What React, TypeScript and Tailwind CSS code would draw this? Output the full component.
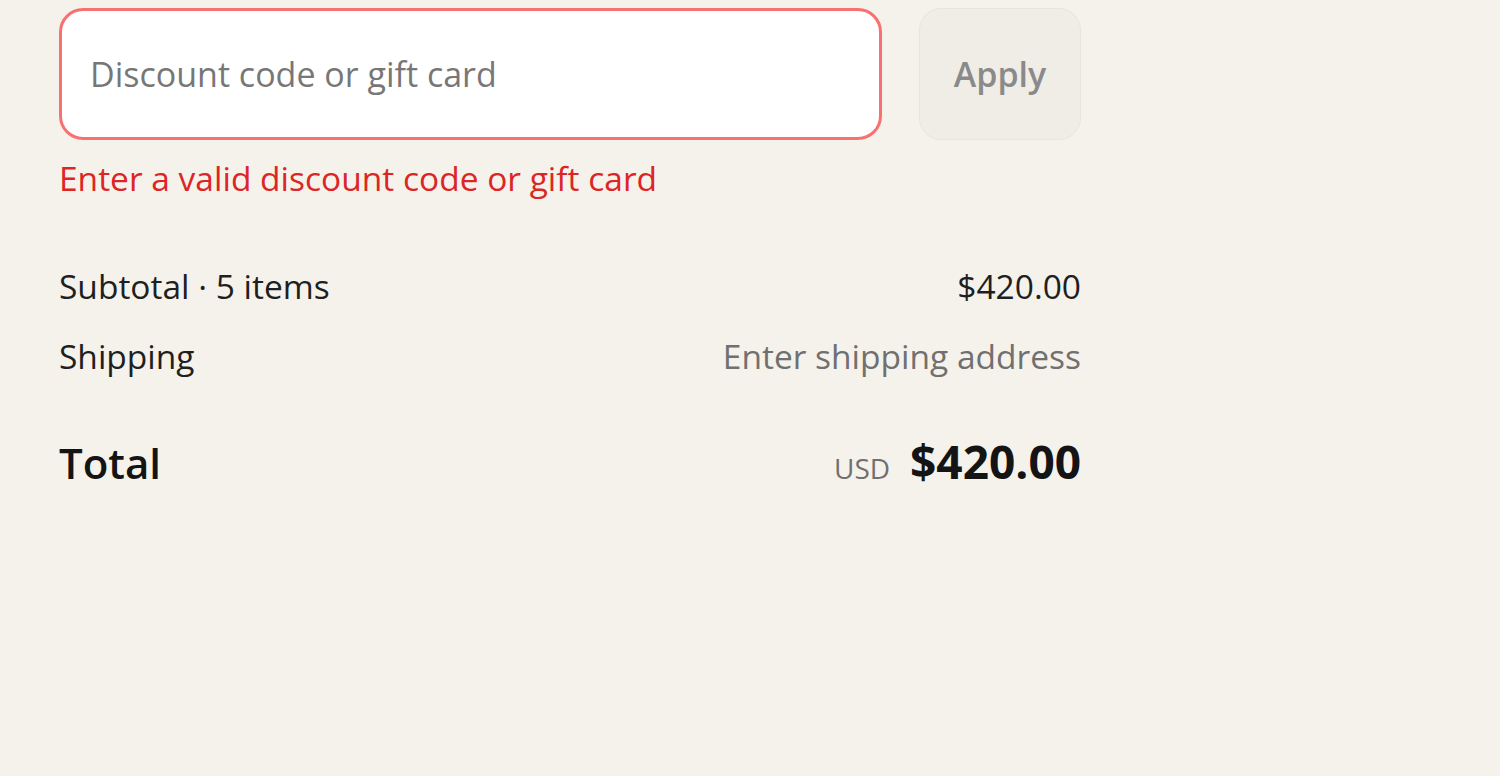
import { useState } from 'react'

export default function App() {
  const [code, setCode] = useState('')

  return (
    <div className="min-h-screen w-full bg-[#f5f2ec] pl-[59px] pt-[8px]" style={{ fontFamily: '"Open Sans", "Noto Sans", sans-serif' }}>
      <div className="w-[1022px]">
        <div className="flex gap-[37px]">
          <input
            value={code}
            onChange={e => setCode(e.target.value)}
            placeholder="Discount code or gift card"
            className="h-[132px] flex-1 rounded-[24px] border-[3px] border-[#f87171] bg-white px-[28px] text-[34px] text-[#222] placeholder:text-[#777] outline-none"
          />
          <button className="h-[132px] w-[162px] rounded-[22px] border border-[#e9e5dd] bg-[#f0ede6] text-[34px] font-semibold text-[#8a8a8a]">
            Apply
          </button>
        </div>
        <div className="mt-[18px] text-[33.5px] leading-[40px] text-[#dc2626]">Enter a valid discount code or gift card</div>

        <div className="mt-[68px] flex justify-between text-[33.5px] leading-[40px] text-[#1f1f1f]">
          <span>Subtotal · 5 items</span>
          <span>$420.00</span>
        </div>
        <div className="mt-[30px] flex justify-between text-[33.5px] leading-[40px]">
          <span className="text-[#1f1f1f]">Shipping</span>
          <span className="text-[#707070]">Enter shipping address</span>
        </div>
        <div className="mt-[57px] flex items-baseline justify-between leading-[56px] text-[#141414]">
          <span className="text-[42px] font-semibold">Total</span>
          <span className="flex items-baseline gap-[20px]">
            <span className="text-[28px] text-[#707070]">USD</span>
            <span className="text-[46px] font-bold">$420.00</span>
          </span>
        </div>
      </div>
    </div>
  )
}
